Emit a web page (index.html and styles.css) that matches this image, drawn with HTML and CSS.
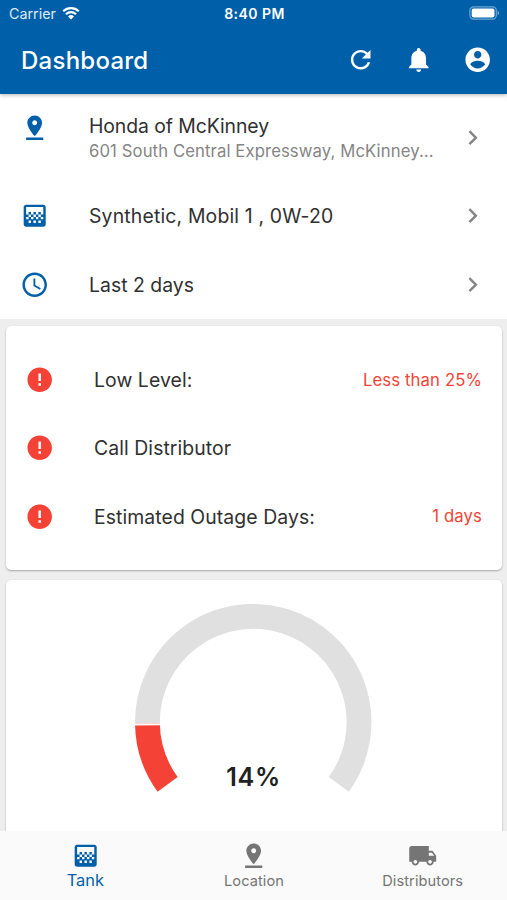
FILE: index.html
```
<!DOCTYPE html>
<html lang="en">

<head>
    <meta charset="UTF-8">
    <meta name="viewport" content="width=device-width, initial-scale=1.0">
    <title>Dashboard</title>
    <link rel="stylesheet" href="styles.css">
</head>

<body>
    <!-- icon sprite -->
    <svg class="sprite">
        <symbol id="pin" viewBox="0 0 24 24"><path d="M18 8c0-3.31-2.69-6-6-6S6 4.69 6 8c0 4.5 6 11 6 11s6-6.5 6-11zm-8 0c0-1.1.9-2 2-2s2 .9 2 2-.89 2-2 2c-1.1 0-2-.9-2-2zM5 20v2h14v-2H5z"/></symbol>
        <symbol id="tank" viewBox="0 0 24 24"><path d="M11 9h2v2h-2zm-2 2h2v2H9zm4 0h2v2h-2zm2-2h2v2h-2zM7 9h2v2H7zm12-6H5c-1.1 0-2 .9-2 2v14c0 1.1.9 2 2 2h14c1.1 0 2-.9 2-2V5c0-1.1-.9-2-2-2zM9 18H7v-2h2v2zm4 0h-2v-2h2v2zm4 0h-2v-2h2v2zm2-7h-2v2h2v2h-2v-2h-2v2h-2v-2h-2v2H9v-2H7v2H5v-2h2v-2H5V5h14v6z"/></symbol>
        <symbol id="error" viewBox="0 0 24 24"><path d="M12 2C6.48 2 2 6.48 2 12s4.48 10 10 10 10-4.48 10-10S17.52 2 12 2zm1 15h-2v-2h2v2zm0-4h-2V7h2v6z"/></symbol>
        <symbol id="chevron" viewBox="0 0 24 24"><path d="M10 6L8.59 7.41 13.17 12l-4.58 4.59L10 18l6-6z"/></symbol>
    </svg>

    <div class="top">
        <div class="status-bar">
            <div class="carrier">
                <span>Carrier</span>
                <svg class="wifi" viewBox="0 0 18 14">
                    <path d="M1.2 5.2a11.3 11.3 0 0 1 15.6 0M4 8.2a7.3 7.3 0 0 1 10 0"/>
                    <path class="dot" d="M9 13.6L6 10.5a4.3 4.3 0 0 1 6 0z"/>
                </svg>
            </div>
            <div class="time">8:40 PM</div>
            <div class="battery">
                <svg viewBox="0 0 31 14">
                    <rect class="shell" x=".9" y=".9" width="26.4" height="12.2" rx="3.6"/>
                    <rect x="2.7" y="2.6" width="22.8" height="8.8" rx="1.8"/>
                    <path class="tip" d="M28.6 4.8c2.2.8 2.2 3.6 0 4.4z"/>
                </svg>
            </div>
        </div>
        <header class="app-bar">
            <h1>Dashboard</h1>
            <div class="actions">
                <svg class="icon" viewBox="0 0 24 24"><path d="M17.65 6.35C16.2 4.9 14.21 4 12 4c-4.42 0-7.99 3.58-7.99 8s3.57 8 7.99 8c3.73 0 6.84-2.55 7.73-6h-2.08c-.82 2.33-3.04 4-5.65 4-3.31 0-6-2.69-6-6s2.69-6 6-6c1.66 0 3.14.69 4.22 1.78L13 11h7V4l-2.35 2.35z"/></svg>
                <svg class="icon" viewBox="0 0 24 24"><path d="M12 22c1.1 0 2-.9 2-2h-4c0 1.1.89 2 2 2zm6-6v-5c0-3.07-1.64-5.64-4.5-6.32V4c0-.83-.67-1.5-1.5-1.5s-1.5.67-1.5 1.5v.68C7.63 5.36 6 7.92 6 11v5l-2 2v1h16v-1l-2-2z"/></svg>
                <svg class="icon" viewBox="0 0 24 24"><path d="M12 2C6.48 2 2 6.48 2 12s4.48 10 10 10 10-4.48 10-10S17.52 2 12 2zm0 3c1.66 0 3 1.34 3 3s-1.34 3-3 3-3-1.34-3-3 1.34-3 3-3zm0 14.2c-2.5 0-4.71-1.28-6-3.22.03-1.99 4-3.08 6-3.08 1.99 0 5.97 1.09 6 3.08-1.29 1.94-3.5 3.22-6 3.22z"/></svg>
            </div>
        </header>
    </div>

    <section class="filters">
        <div class="filter two-line">
            <svg class="icon"><use href="#pin"/></svg>
            <div class="filter-text">
                <div class="label dealer">Honda of McKinney</div>
                <div class="address">601 South Central Expressway, McKinney...</div>
            </div>
            <svg class="icon chevron"><use href="#chevron"/></svg>
        </div>
        <div class="filter">
            <svg class="icon"><use href="#tank"/></svg>
            <div class="filter-text label product">Synthetic, Mobil 1 , 0W-20</div>
            <svg class="icon chevron"><use href="#chevron"/></svg>
        </div>
        <div class="filter">
            <svg class="icon" viewBox="0 0 24 24"><path d="M11.99 2C6.47 2 2 6.48 2 12s4.47 10 9.99 10C17.52 22 22 17.52 22 12S17.52 2 11.99 2zM12 20c-4.42 0-8-3.58-8-8s3.58-8 8-8 8 3.58 8 8-3.58 8-8 8zm.5-13H11v6l5.25 3.15.75-1.23-4.5-2.67z"/></svg>
            <div class="filter-text label">Last 2 days</div>
            <svg class="icon chevron"><use href="#chevron"/></svg>
        </div>
    </section>

    <main>
        <section class="card alerts">
            <div class="alert">
                <svg class="icon"><use href="#error"/></svg>
                <div class="label">Low Level:</div>
                <div class="value">Less than 25%</div>
            </div>
            <div class="alert">
                <svg class="icon"><use href="#error"/></svg>
                <div class="label">Call Distributor</div>
            </div>
            <div class="alert">
                <svg class="icon"><use href="#error"/></svg>
                <div class="label">Estimated Outage Days:</div>
                <div class="value">1 days</div>
            </div>
        </section>

        <section class="card gauge">
            <!-- 252deg arc starting at 144deg, first 14% filled -->
            <svg viewBox="0 0 240 240">
                <path class="track" d="M13.51 121.3A106.5 106.5 0 1 1 206.16 182.6"/>
                <path class="level" d="M33.84 182.6A106.5 106.5 0 0 1 13.51 121.3"/>
                <path class="gap" d="M0 122.4L28 122.1"/>
                <text x="120.3" y="184.5">14%</text>
            </svg>
        </section>
    </main>

    <nav class="bottom-nav">
        <div class="tab active">
            <svg class="icon"><use href="#tank"/></svg>
            <span>Tank</span>
        </div>
        <div class="tab">
            <svg class="icon"><use href="#pin"/></svg>
            <span>Location</span>
        </div>
        <div class="tab">
            <svg class="icon" viewBox="0 0 24 24"><path d="M20 8h-3V4H3c-1.1 0-2 .9-2 2v11h2c0 1.66 1.34 3 3 3s3-1.34 3-3h6c0 1.66 1.34 3 3 3s3-1.34 3-3h2v-5l-3-4zM6 18.5c-.83 0-1.5-.67-1.5-1.5s.67-1.5 1.5-1.5 1.5.67 1.5 1.5-.67 1.5-1.5 1.5zm13.5-9l1.96 2.5H17V9.5h2.5zm-1.5 9c-.83 0-1.5-.67-1.5-1.5s.67-1.5 1.5-1.5 1.5.67 1.5 1.5-.67 1.5-1.5 1.5z"/></svg>
            <span>Distributors</span>
        </div>
    </nav>
</body>

</html>
```
FILE: styles.css
```
* {
    margin: 0;
    padding: 0;
    box-sizing: border-box;
}

body {
    height: 900px;
    display: flex;
    flex-direction: column;
    overflow: hidden;
    background: #eeeeee;
    color: #303030;
    font-family: Inter, "Liberation Sans", sans-serif;
}

.sprite {
    display: none;
}

.icon {
    display: block;
    flex: none;
    width: 29.4px;
    height: 29.4px;
    fill: currentColor;
}

/* header */
.top {
    flex: none;
    height: 94px;
    background: #005fa9;
    color: white;
    box-shadow: 0 1px 4px rgba(0, 0, 0, 0.3);
    z-index: 1;
}

.status-bar {
    height: 26px;
    padding: 0 7px 0 9px;
    display: flex;
    align-items: center;
}

.carrier,
.battery {
    flex: 1;
    display: flex;
    align-items: center;
    gap: 6px;
    font-size: 14.3px;
    color: #dcebf5;
}

.battery {
    justify-content: flex-end;
}

.battery svg {
    width: 31px;
    height: 14px;
    fill: white;
}

.battery .shell {
    fill: none;
    stroke: #6fa6d0;
    stroke-width: 1.2;
}

.battery .tip {
    fill: #6fa6d0;
}

.wifi {
    width: 18px;
    height: 14px;
    fill: none;
    stroke: white;
    stroke-width: 2.2;
}

.wifi .dot {
    fill: white;
    stroke: none;
}

.time {
    font-size: 14px;
    font-weight: 600;
    letter-spacing: 0.45px;
}

.app-bar {
    height: 68px;
    padding: 0 14.5px 0 21px;
    display: flex;
    align-items: center;
    justify-content: space-between;
}

h1 {
    font-size: 24px;
    font-weight: 500;
    letter-spacing: 0.25px;
}

.actions {
    display: flex;
    gap: 29.4px;
}

/* filters */
.filters {
    flex: none;
    height: 225px;
    padding-top: 5px;
    background: white;
}

.filter {
    height: 68.5px;
    padding: 0 20px 1px 20px;
    display: flex;
    align-items: center;
    color: #005fa9;
}

.filter.two-line {
    height: 83px;
    padding-bottom: 5px;
}

.two-line .icon:first-child {
    margin-bottom: 20px;
}

.two-line .filter-text {
    margin-bottom: 2px;
}

.filter-text {
    flex: 1;
    margin-left: 39.6px;
    white-space: nowrap;
}

.label {
    padding-top: 1px;
    font-size: 19.4px;
    line-height: 26px;
    letter-spacing: 0.02px;
    color: #303030;
}

.dealer {
    letter-spacing: -0.08px;
}

.product {
    letter-spacing: 0.17px;
}

.address {
    font-size: 16.7px;
    line-height: 24px;
    letter-spacing: 0.1px;
    color: #858585;
}

.chevron {
    color: #858585;
}

/* cards */
main {
    flex: 1;
    min-height: 0;
    padding: 7px 5px 0 6px;
    overflow: hidden;
}

.card {
    background: white;
    border-radius: 5px;
    box-shadow: 0 1px 2px rgba(0, 0, 0, 0.3);
}

.alerts {
    height: 244px;
    padding: 19.4px 20px 0 19px;
    margin-bottom: 10px;
}

.alert {
    height: 68.4px;
    display: flex;
    align-items: center;
    color: #f44336;
}

.alert .label {
    margin-left: 39.6px;
    letter-spacing: 0.08px;
}

.value {
    margin-left: auto;
    font-size: 16.7px;
    letter-spacing: 0.13px;
}

.gauge {
    height: 300px;
    padding: 23px 1px 0 0;
}

.gauge svg {
    display: block;
    width: 238.4px;
    height: 238.4px;
    margin: 0 auto;
    fill: none;
    stroke-width: 25;
}

.gauge .track {
    stroke: #e0e0e0;
}

.gauge .level {
    stroke: #f44336;
}

.gauge .gap {
    stroke: white;
    stroke-width: 2;
}

.gauge text {
    fill: #212121;
    font-size: 25.3px;
    font-weight: 600;
    letter-spacing: 0.7px;
    text-anchor: middle;
}

/* bottom navigation */
.bottom-nav {
    flex: none;
    height: 69px;
    display: flex;
    background: #fafafa;
}

.tab {
    flex: 1;
    padding-top: 10px;
    display: flex;
    flex-direction: column;
    align-items: center;
    color: #757575;
    font-size: 14.6px;
    line-height: 23px;
    letter-spacing: 0.08px;
}

.tab.active {
    padding-left: 1px;
    color: #005fa9;
    font-size: 16.4px;
    line-height: 21px;
    letter-spacing: 0;
}
```
